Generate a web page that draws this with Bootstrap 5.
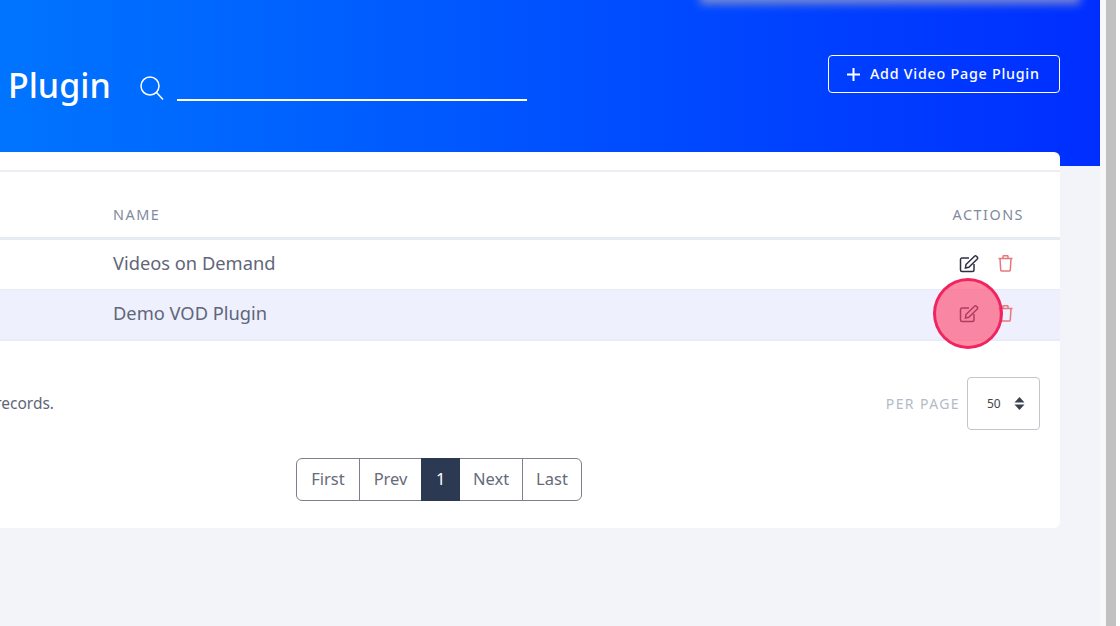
<!DOCTYPE html>
<html lang="en">
<head>
    <meta charset="UTF-8">
    <meta name="viewport" content="width=device-width, initial-scale=1.0">
    <title>Video Page Plugin</title>
    <link href="https://cdn.jsdelivr.net/npm/bootstrap@5.3.0/dist/css/bootstrap.min.css" rel="stylesheet">
    <style>
        html, body { height: 100%; overflow: hidden; }
        body { background: #fff; font-family: "Noto Sans", "Open Sans", sans-serif; color: #5f6679; }
        .app-frame { width: 1120px; height: 626px; display: flex; overflow: hidden; position: relative; }
        .app-page { width: 1100px; flex: none; background: #f3f4fa; position: relative; overflow: hidden; }
        .scroll-rail { width: 16px; height: 626px; flex: none; background: #f8f8fa; padding-left: 6px; }
        .scroll-thumb { width: 10px; height: 626px; background: #c1c1c1; }
        .hero { height: 166px; background: linear-gradient(90deg, #0080ff 0%, #002eff 100%); padding: 55px 40px 0 0; margin-left: -182px; display: flex; justify-content: space-between; align-items: flex-start; }
        .hero-title { font-size: 34px; font-weight: 500; color: #fff; line-height: 60px; margin: 0; white-space: nowrap; }
        .hero-left { display: flex; align-items: flex-start; }
        .search-box { display: flex; align-items: flex-end; margin-left: 28px; height: 46px; }
        .search-line { width: 350px; border-bottom: 2px solid #fff; margin-left: 12px; height: 2px; }
        .btn-add { font-size: 14.3px; font-weight: 500; letter-spacing: .75px; border: 1.5px solid #fff; color: #fff; height: 38px; width: 232px; padding: 0 0 0 18px; border-radius: 4px; display: flex; align-items: center; gap: 10px; background: transparent; white-space: nowrap; }
        .panel { margin: -14px 40px 0 -182px; height: 376px; background: #fff; border-radius: 6px; position: relative; padding-top: 18px; }
        .data-table { margin: 0; border-top: 2px solid #eceef4; }
        .data-table th { font-size: 14.4px; font-weight: 400; letter-spacing: 1.5px; color: #7f8a9e; height: 67px; vertical-align: middle; padding: 22px 36px 0 295px; border-bottom: 3px solid #e7ebf3; }
        .data-table th.acts, .data-table td.acts { text-align: right; padding-left: 0; padding-right: 36px; }
        .data-table td { font-size: 18.3px; color: #5f6679; height: 51px; vertical-align: middle; padding: 0 0 3px 295px; border-bottom: 1px solid #e7ebf3; }
        .data-table td.acts { padding-bottom: 1px; }
        .data-table tr.picked td { background: #eef1fd; border-bottom: 2px solid #e9ecf5; }
        .act-cell { display: flex; justify-content: flex-end; gap: 19px; align-items: center; margin-right: 11px; }
        .panel-foot { display: flex; justify-content: space-between; align-items: center; padding: 36px 20px 0 0; }
        .rec-count { font-size: 15.5px; white-space: nowrap; color: #5f6679; width: 236px; text-align: right; }
        .per-page { display: flex; align-items: center; gap: 7px; }
        .per-label { font-size: 14px; letter-spacing: 1.4px; color: #b4bac6; }
        .per-select { width: 73px; height: 53px; font-size: 12px; color: #444; border: 1px solid #c2c5cc; border-radius: 4px; padding: 0 0 0 19px; background-image: url("data:image/svg+xml,%3Csvg xmlns='http://www.w3.org/2000/svg' viewBox='0 0 12 14'%3E%3Cpath fill='%233d4250' d='M6 0l5.500 5.800H.5zM6 14L.5 8.200h11z'/%3E%3C/svg%3E"); background-position: right 14px center; background-size: 11px 13px; }
        .pager { display: flex; justify-content: center; margin-top: 28px; }
        .pager .pagination { margin: 0; }
        .pager .page-link { font-size: 16.5px; color: #666b7a; height: 43px; padding: 0 13.5px; display: flex; align-items: center; border-color: #7b808c; line-height: 1; }
        .pager .page-item:first-child .page-link { padding: 0 14.5px; }
        .pager .page-item:nth-child(4) .page-link { padding: 0 12.5px; }
        .pager .page-item.active .page-link { background: #2b3a52; border-color: #2b3a52; color: #fff; padding: 0 14px; }
        .click-mark { position: absolute; left: 933px; top: 278px; width: 70px; height: 71px; border-radius: 50%; background: rgba(255, 70, 110, .62); border: 3px solid #f0245f; }
        .blur-band { position: absolute; left: 700px; top: -12px; width: 380px; height: 16px; background: #9a9ec4; filter: blur(5px); opacity: .8; }
    </style>
</head>
<body>
    <div class="app-frame">
        <div class="app-page">
            <div class="hero">
                <div class="hero-left">
                    <h1 class="hero-title">Video Page Plugin</h1>
                    <div class="search-box">
                        <svg width="26" height="26" viewBox="0 0 26 26" fill="none" stroke="#fff" stroke-width="1.5"><circle cx="11" cy="11" r="9"/><path d="M17.500 17.500 24 24.500"/></svg>
                        <div class="search-line"></div>
                    </div>
                </div>
                <button class="btn btn-add" type="button">
                    <svg width="13" height="13" viewBox="0 0 13 13" stroke="#fff" stroke-width="2"><path d="M6.500 0v13M0 6.500h13"/></svg>
                    Add Video Page Plugin
                </button>
            </div>

            <div class="panel">
                <table class="table data-table">
                    <thead>
                        <tr><th>NAME</th><th class="acts">ACTIONS</th></tr>
                    </thead>
                    <tbody>
                        <tr>
                            <td>Videos on Demand</td>
                            <td class="acts">
                                <div class="act-cell">
                                    <svg width="20" height="18" viewBox="0 0 20 18" fill="none" stroke="#2b3242" stroke-width="1.5"><path d="M10 3H3a1.500 1.500 0 0 0-1.500 1.500v10.500A1.500 1.500 0 0 0 3 16.500h10.500A1.500 1.500 0 0 0 15 15V9"/><path d="M7 9.500 15.500 1.200a1.300 1.300 0 0 1 1.900 0l.9.900a1.300 1.300 0 0 1 0 1.900L9.800 12.300l-3.400.7z"/></svg>
                                    <svg width="15" height="17" viewBox="0 0 15 17" fill="none" stroke="#e8777b" stroke-width="1.5"><path d="M.5 3.500h14M5 3.500V1.500a.8.800 0 0 1 .8-.8h3.400a.8.800 0 0 1 .8.800v2M2 3.500l.7 11.400a1.300 1.300 0 0 0 1.300 1.200h7a1.300 1.300 0 0 0 1.300-1.200L13 3.500"/></svg>
                                </div>
                            </td>
                        </tr>
                        <tr class="picked">
                            <td>Demo VOD Plugin</td>
                            <td class="acts">
                                <div class="act-cell">
                                    <svg width="20" height="18" viewBox="0 0 20 18" fill="none" stroke="#2b3242" stroke-width="1.5"><path d="M10 3H3a1.500 1.500 0 0 0-1.500 1.500v10.500A1.500 1.500 0 0 0 3 16.500h10.500A1.500 1.500 0 0 0 15 15V9"/><path d="M7 9.500 15.500 1.200a1.300 1.300 0 0 1 1.900 0l.9.900a1.300 1.300 0 0 1 0 1.900L9.800 12.300l-3.400.7z"/></svg>
                                    <svg width="15" height="17" viewBox="0 0 15 17" fill="none" stroke="#e8777b" stroke-width="1.5"><path d="M.5 3.500h14M5 3.500V1.500a.8.800 0 0 1 .8-.8h3.400a.8.800 0 0 1 .8.800v2M2 3.500l.7 11.400a1.300 1.300 0 0 0 1.300 1.200h7a1.300 1.300 0 0 0 1.300-1.200L13 3.500"/></svg>
                                </div>
                            </td>
                        </tr>
                    </tbody>
                </table>
                <div class="panel-foot">
                    <span class="rec-count">Showing 1 to 2 of 2 records.</span>
                    <div class="per-page">
                        <span class="per-label">PER PAGE</span>
                        <select class="form-select per-select"><option>50</option></select>
                    </div>
                </div>
                <nav class="pager">
                    <ul class="pagination">
                        <li class="page-item"><a class="page-link" href="#">First</a></li>
                        <li class="page-item"><a class="page-link" href="#">Prev</a></li>
                        <li class="page-item active"><a class="page-link" href="#">1</a></li>
                        <li class="page-item"><a class="page-link" href="#">Next</a></li>
                        <li class="page-item"><a class="page-link" href="#">Last</a></li>
                    </ul>
                </nav>
            </div>
            <div class="blur-band"></div>
            <div class="click-mark"></div>
        </div>
        <div class="scroll-rail"><div class="scroll-thumb"></div></div>
    </div>
    <script src="https://cdn.jsdelivr.net/npm/bootstrap@5.3.0/dist/js/bootstrap.bundle.min.js"></script>
</body>
</html>
